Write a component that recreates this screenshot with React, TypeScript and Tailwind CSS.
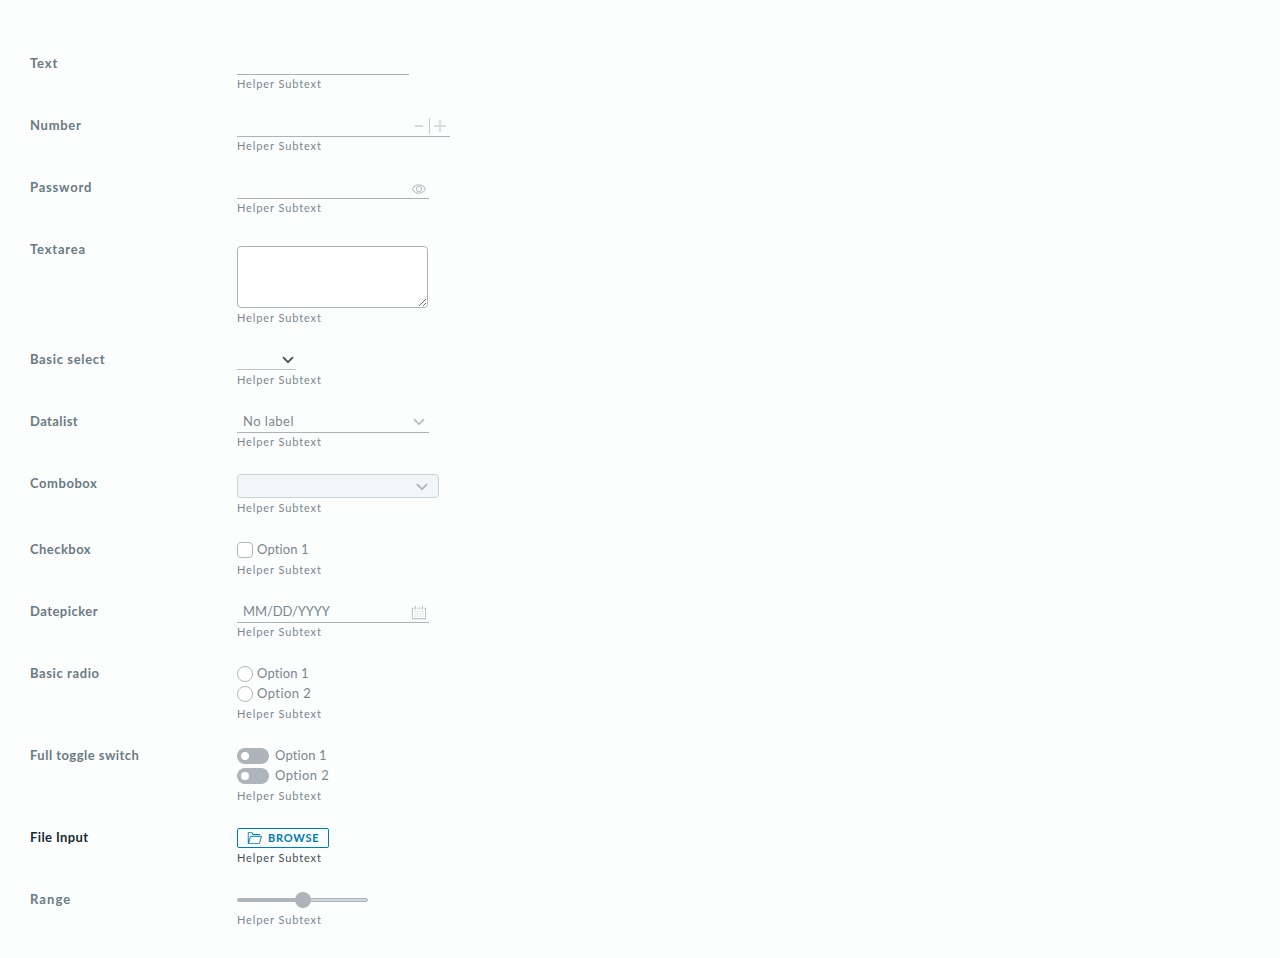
import type { ReactNode } from "react";

type RowProps = {
  label: string;
  labelClass: string;
  active?: boolean;
  children: ReactNode;
};

function Row({ label, labelClass, active = false, children }: RowProps) {
  return (
    <div className="mb-[22px] flex items-start">
      <div className={`w-[207px] shrink-0 text-[13px] leading-5 font-bold whitespace-nowrap ${active ? "text-[#1b2a32]" : "text-[#6a7a83]"} ${labelClass}`}>
        {label}
      </div>
      <div className="flex flex-col items-start">
        {children}
        <div className={`text-[11px] leading-[18px] tracking-[0.89px] whitespace-nowrap ${active ? "text-[#454e54]" : "text-[#7a878f]"}`}>Helper Subtext</div>
      </div>
    </div>
  );
}

function Chevron({ className }: { className: string }) {
  return (
    <svg viewBox="0 0 12 8" className={`h-2 w-3 ${className}`} fill="none" stroke="currentColor" strokeWidth="1.7">
      <path d="M1 1.2 L6 6.2 L11 1.2" />
    </svg>
  );
}

function Choice({ text, shape, spacing }: { text: string; shape: string; spacing: string }) {
  return (
    <div className="flex h-5 items-center">
      <span className={`mt-0.5 mr-1 h-4 w-4 border border-[#aeb8bc] bg-white ${shape}`} />
      <span className={`text-[13px] leading-5 text-[#7a878f] ${spacing}`}>{text}</span>
    </div>
  );
}

function Toggle({ text, spacing }: { text: string; spacing: string }) {
  return (
    <div className="flex h-5 items-center">
      <span className="mt-0.5 mr-1.5 flex h-4 w-8 items-center rounded-full bg-[#adb5ba] pl-1">
        <span className="h-2 w-2 rounded-full bg-white" />
      </span>
      <span className={`text-[13px] leading-5 text-[#7a878f] ${spacing}`}>{text}</span>
    </div>
  );
}

export default function App() {
  return (
    <div className="h-[958px] w-full overflow-hidden bg-[#fcfefe] pt-[53px] pl-[30px] font-[Lato,sans-serif]">
      <Row label="Text" labelClass="tracking-[0.85px]">
        <div className="h-[22px] w-[172px] border-b border-[#aab3ba]" />
      </Row>
      <Row label="Number" labelClass="tracking-[0.7px]">
        <div className="flex h-[22px] w-[213px] items-start justify-end border-b border-[#aab3ba] pt-[3px] pr-[2px]">
          <svg width="34" height="16" viewBox="0 0 34 16" fill="none">
            <path d="M1 8H9" stroke="#d5dade" strokeWidth="2" />
            <path d="M15.5 0V16" stroke="#c3c8cb" />
            <path d="M20 8H32M26 2V14" stroke="#d5dade" strokeWidth="1.8" />
          </svg>
        </div>
      </Row>
      <Row label="Password" labelClass="tracking-[0.8px]">
        <div className="flex h-[22px] w-48 items-start justify-end border-b border-[#aab3ba] pt-1 pr-[2px]">
          <svg width="16" height="16" viewBox="0 0 36 36" fill="#aeb8bc">
            <path d="M33.62,17.53c-3.37-6.23-9.28-10-15.82-10S5.34,11.3,2,17.53L1.72,18l.26.48c3.37,6.23,9.28,10,15.82,10s12.46-3.72,15.82-10l.26-.48ZM17.8,26.43C12.17,26.43,7,23.29,4,18c3-5.29,8.17-8.43,13.8-8.43S28.54,12.72,31.59,18C28.54,23.29,23.42,26.43,17.8,26.43Z" />
            <path d="M18.09,11.17A6.86,6.86,0,1,0,25,18,6.86,6.86,0,0,0,18.09,11.17Zm0,11.72A4.86,4.86,0,1,1,23,18,4.87,4.87,0,0,1,18.09,22.89Z" />
          </svg>
        </div>
      </Row>
      <Row label="Textarea" labelClass="tracking-[0.8px]">
        <div className="h-[70px] pt-[7px]">
          <textarea className="block h-[62px] w-[191px] resize rounded-[4px] border border-[#aab3ba] bg-white" />
        </div>
      </Row>
      <Row label="Basic select" labelClass="tracking-[0.64px]">
        <div className="h-[22px]">
          <div className="flex h-[21px] w-[59px] items-start justify-end border-b border-[#c0c5c8] pt-[7px] pr-[2px]">
            <Chevron className="text-[#454e54]" />
          </div>
        </div>
      </Row>
      <Row label="Datalist" labelClass="tracking-[0.42px]">
        <div className="flex h-[22px] w-48 items-start justify-between border-b border-[#aab3ba] pr-1 pl-1.5">
          <span className="text-[13px] leading-5 tracking-[0.48px] text-[#7a878f]">No label</span>
          <Chevron className="mt-[7px] text-[#b5bdc2]" />
        </div>
      </Row>
      <Row label="Combobox" labelClass="tracking-[0.55px]">
        <div className="h-[26px] pt-px">
          <div className="flex h-6 w-[202px] items-start justify-end rounded-[4px] border border-[#c8d2d7] bg-[#f1f6f8] pt-2 pr-[10px]">
            <Chevron className="text-[#b0b5b8]" />
          </div>
        </div>
      </Row>
      <Row label="Checkbox" labelClass="tracking-[0.45px]">
        <div className="h-[22px]">
          <Choice text="Option 1" shape="rounded-[4px]" spacing="tracking-[0.1px]" />
        </div>
      </Row>
      <Row label="Datepicker" labelClass="tracking-[0.47px]">
        <div className="flex h-[22px] w-48 items-start justify-between border-b border-[#aab3ba] pr-[2px] pl-1.5">
          <span className="text-[13px] leading-5 tracking-[-0.12px] text-[#7a878f]">MM/DD/YYYY</span>
          <svg width="16" height="16" viewBox="0 0 36 36" fill="#aeb8bc" className="mt-1">
            <path d="M32.25,6H29V8h3V30H4V8H7V6H3.75A1.78,1.78,0,0,0,2,7.81V30.19A1.78,1.78,0,0,0,3.75,32h28.5A1.78,1.78,0,0,0,34,30.19V7.81A1.78,1.78,0,0,0,32.25,6Z" />
            <path d="M8 14h2v2H8zM14 14h2v2h-2zM20 14h2v2h-2zM26 14h2v2h-2zM8 19h2v2H8zM14 19h2v2h-2zM20 19h2v2h-2zM26 19h2v2h-2zM8 24h2v2H8zM14 24h2v2h-2zM20 24h2v2h-2zM26 24h2v2h-2zM13 6h10v2H13zM9 2h2v8H9zM25 2h2v8h-2z" />
          </svg>
        </div>
      </Row>
      <Row label="Basic radio" labelClass="tracking-[0.6px]">
        <div className="h-[42px]">
          <Choice text="Option 1" shape="rounded-full" spacing="tracking-[0.1px]" />
          <Choice text="Option 2" shape="rounded-full" spacing="tracking-[0.42px]" />
        </div>
      </Row>
      <Row label="Full toggle switch" labelClass="tracking-[0.47px]">
        <div className="h-[42px]">
          <Toggle text="Option 1" spacing="tracking-[0.1px]" />
          <Toggle text="Option 2" spacing="tracking-[0.42px]" />
        </div>
      </Row>
      <Row label="File Input" active labelClass="tracking-[0.38px]">
        <div className="h-[22px] pt-px">
          <button className="flex h-5 w-[92px] items-center rounded-[2px] border border-[#0079ad] pl-2 text-[#0079ad]">
            <svg width="16" height="16" viewBox="0 0 36 36" fill="currentColor">
              <path d="M35.32,13.74A1.71,1.71,0,0,0,33.87,13H11.17a2.59,2.59,0,0,0-2.25,1.52,1,1,0,0,0,0,.14L6,25V7h6.49l2.61,3.59a1,1,0,0,0,.81.41H32a2,2,0,0,0-2-2H16.94L14.32,5.41A1,1,0,0,0,13.51,5H6A2,2,0,0,0,4,7V29.69A1.37,1.37,0,0,0,5.41,31H30.34a1,1,0,0,0,1-.72l4.19-15.1A1.64,1.64,0,0,0,35.32,13.74ZM29.55,29H6.9l3.88-13.81a.66.66,0,0,1,.38-.24H33.49Z" />
            </svg>
            <span className="ml-1.5 text-[11px] leading-[18px] font-bold tracking-[0.75px]">BROWSE</span>
          </button>
        </div>
      </Row>
      <Row label="Range" labelClass="tracking-[1.1px]">
        <div className="flex h-[22px] w-[131px] items-center">
          <span className="h-1 w-[59px] rounded-l-full bg-[#adb5ba]" />
          <span className="-mx-px h-4 w-4 shrink-0 rounded-full bg-[#adb5ba]" />
          <span className="h-1 flex-1 rounded-r-full border border-[#adb5ba] bg-[#ccd5da]" />
        </div>
      </Row>
    </div>
  );
}
